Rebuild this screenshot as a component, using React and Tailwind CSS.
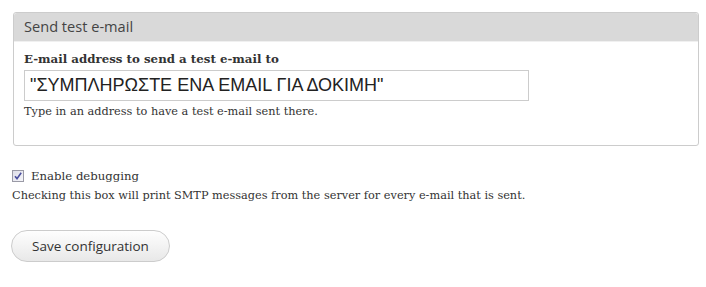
import React from 'react';

function CheckBox() {
  return (
    <svg width="12" height="12" viewBox="0 0 12 12" className="shrink-0">
      <defs>
        <linearGradient id="cbg" x1="0" y1="0" x2="1" y2="1">
          <stop offset="0" stopColor="#dcdce6" />
          <stop offset="1" stopColor="#f7f7fb" />
        </linearGradient>
      </defs>
      <rect x="0.5" y="0.5" width="11" height="11" fill="url(#cbg)" stroke="#9a9aa6" />
      <path d="M3 6.2 L5 8.6 L9.2 2.8" fill="none" stroke="#4b4f9e" strokeWidth="1.6" />
    </svg>
  );
}

export default function App() {
  return (
    <div className="w-[706px] h-[287px] bg-white text-[#333] font-['DejaVu_Serif',serif] text-[11.3px]">
      <div className="pt-3 pl-[13px] pr-2">
        <fieldset className="w-[686px] h-[134px] border border-[#ccc] rounded-[3px] overflow-hidden">
          <div className="h-[29px] bg-[#d9d9d9] border-b border-[#f0f0f0] flex items-center pl-[10px] font-['Open_Sans',sans-serif] text-[14.6px] text-[#444]">
            Send test e-mail
          </div>
          <div className="px-[10px] pt-[8px]">
            <label className="block font-bold text-[11.8px] leading-[18px] text-[#333]">
              E-mail address to send a test e-mail to
            </label>
            <input
              type="text"
              readOnly
              value={'"ΣΥΜΠΛΗΡΩΣΤΕ ΕΝΑ EMAIL ΓΙΑ ΔΟΚΙΜΗ"'}
              className="mt-[2px] block w-[505px] h-[31px] border border-[#ccc] px-[5px] font-['Liberation_Sans',sans-serif] text-[18px] text-[#222] outline-none"
            />
            <p className="mt-[3px] text-[11.3px] leading-[16px] text-[#333]">
              Type in an address to have a test e-mail sent there.
            </p>
          </div>
        </fieldset>
        <div className="mt-[22px] -ml-[1px]">
          <label className="flex items-center gap-[7px] text-[11.7px] leading-[16px]">
            <CheckBox />
            Enable debugging
          </label>
          <p className="mt-[4px] text-[11.3px] leading-[16px]">
            Checking this box will print SMTP messages from the server for every e-mail that is sent.
          </p>
        </div>
        <button className="mt-[26px] -ml-[2px] w-[159px] h-[32px] rounded-full border border-[#ccc] bg-gradient-to-b from-[#fefefe] to-[#e8e8e8] font-['Open_Sans',sans-serif] text-[13.5px] text-[#333]">
          Save configuration
        </button>
      </div>
    </div>
  );
}
